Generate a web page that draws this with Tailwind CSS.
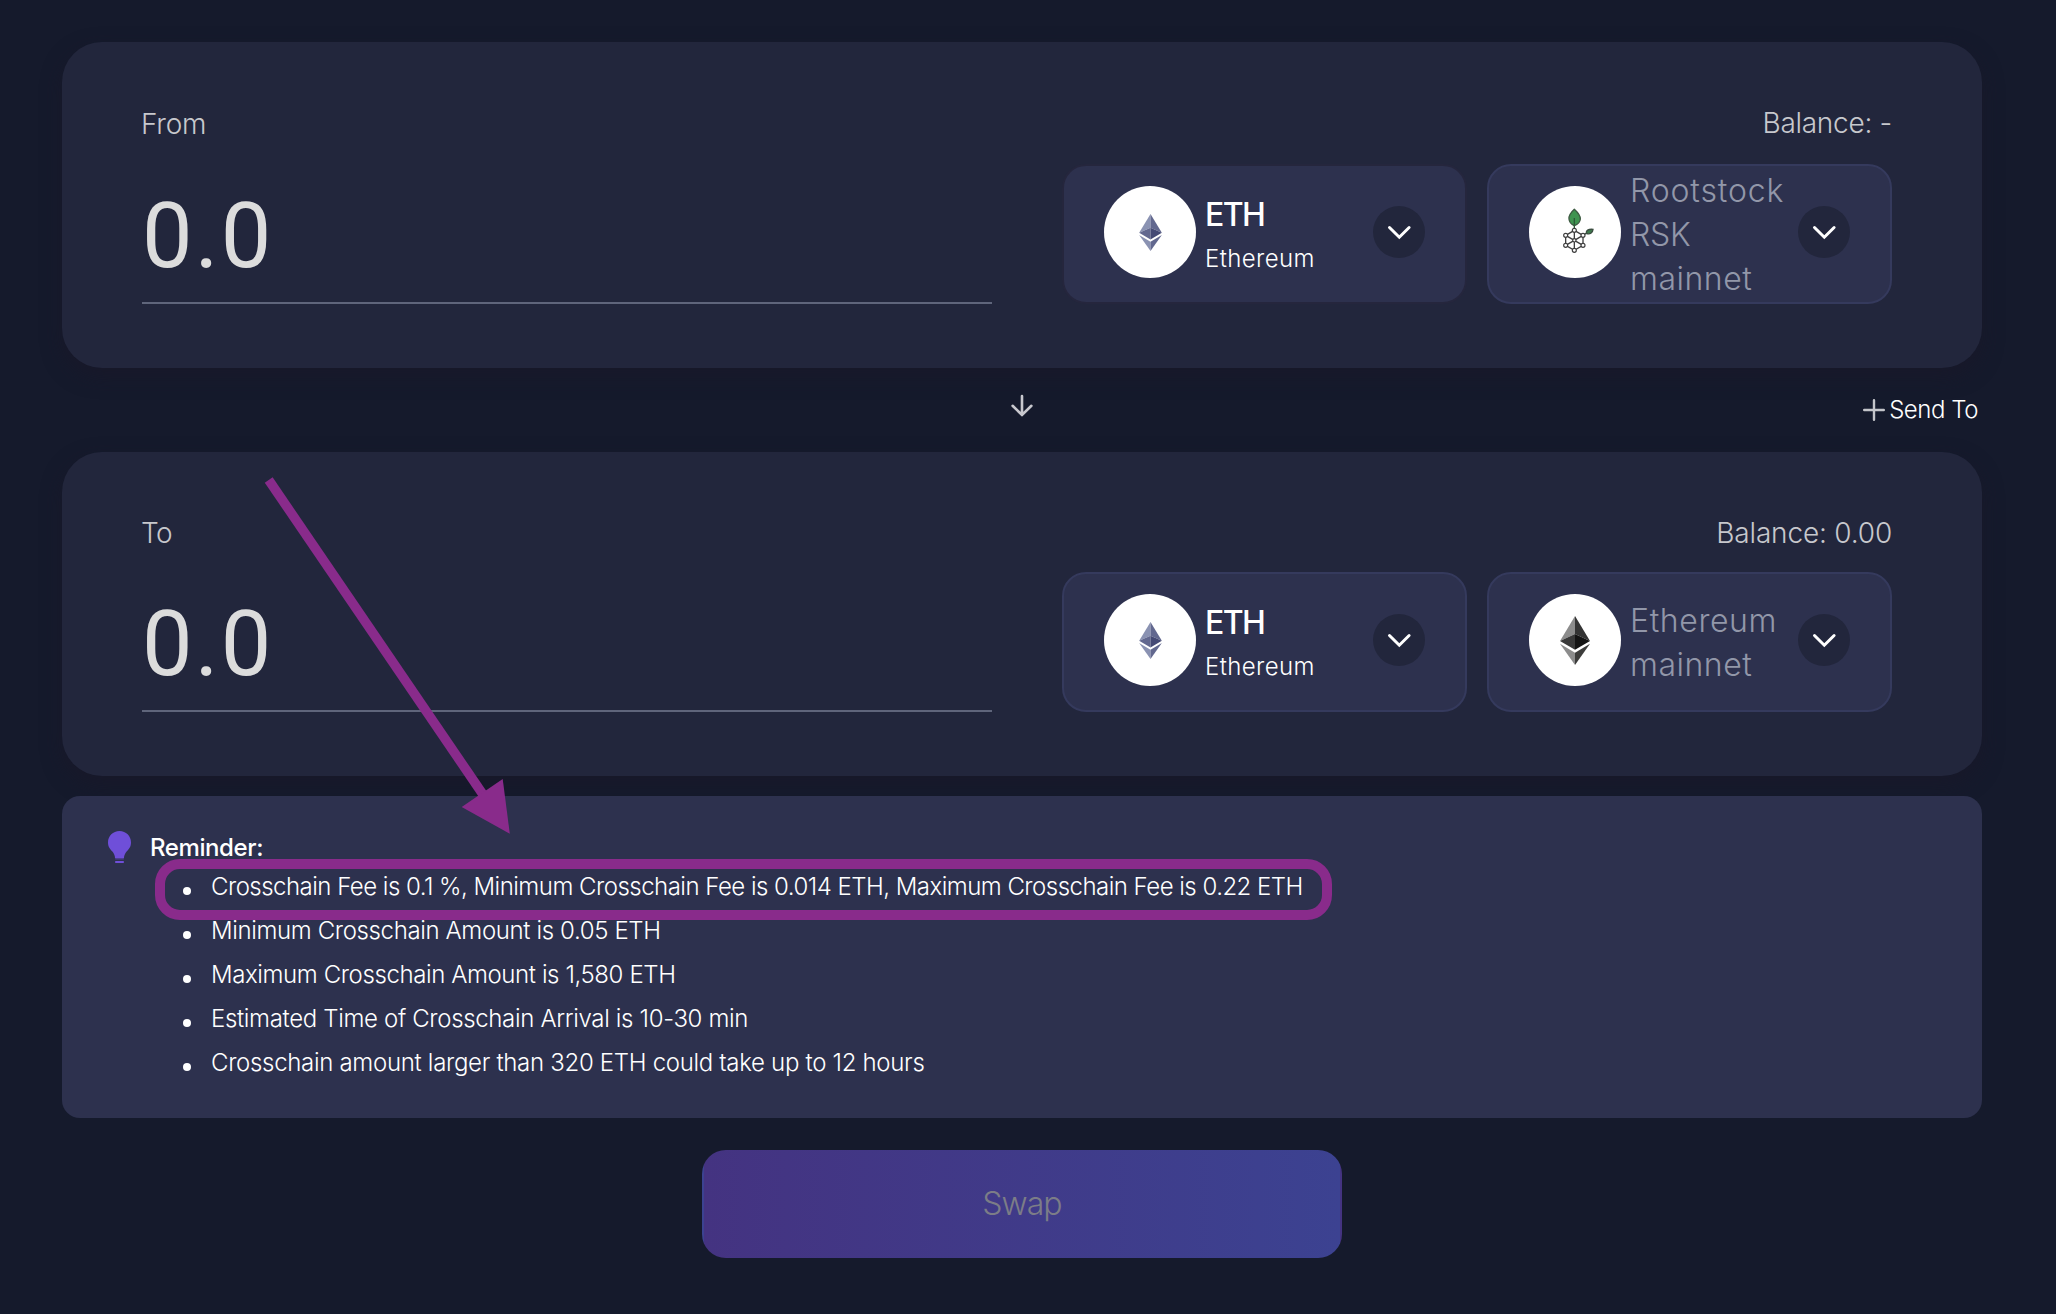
<!DOCTYPE html>
<html lang="en">
<head>
<meta charset="utf-8">
<title>Swap</title>
<script src="https://cdn.jsdelivr.net/npm/@tailwindcss/browser@4"></script>
</head>
<body class="relative h-[1314px] w-[2056px] overflow-hidden bg-[#151a2c] pt-[42px] pl-[62px] font-['Inter',sans-serif] font-light text-white">
<svg class="hidden">
  <symbol id="chevron" viewBox="0 0 52 52"><path d="M16.5 21.5 26.3 31.2 36.1 21.5" fill="none" stroke="#fff" stroke-width="3" stroke-linecap="round"/></symbol>
  <symbol id="eth-blue" viewBox="0 0 256 417">
    <path fill="#8a92b2" d="M128 0 0 212 128 154z"/><path fill="#62688f" d="M128 0 256 212 128 154z"/>
    <path fill="#62688f" d="M0 212 128 154V288z"/><path fill="#454a75" d="M256 212 128 154V288z"/>
    <path fill="#8a92b2" d="M0 237 128 312V417z"/><path fill="#62688f" d="M256 237 128 312V417z"/>
  </symbol>
  <symbol id="eth-dark" viewBox="0 0 256 417">
    <path fill="#8c8c8c" d="M128 0 0 212 128 154z"/><path fill="#343434" d="M128 0 256 212 128 154z"/>
    <path fill="#393939" d="M0 212 128 154V288z"/><path fill="#141414" d="M256 212 128 154V288z"/>
    <path fill="#8c8c8c" d="M0 237 128 312V417z"/><path fill="#3c3c3b" d="M256 237 128 312V417z"/>
  </symbol>
</svg>

<main class="w-[1920px]">
  <section class="h-[326px] rounded-[40px] bg-[#22263c] px-20 pt-[60px] pr-[90px] shadow-[0_8px_20px_rgba(26,24,40,0.6)]">
    <div class="flex h-[62px] items-start justify-between text-[28px] leading-[42px] text-[#c7c8cd]">
      <span class="mt-px -ml-px tracking-[-0.2px]">From</span><span class="tracking-[-0.28px]">Balance: -</span>
    </div>
    <div class="flex">
      <div class="h-[140px] w-[850px] border-b-2 border-[#5f657b] pt-[5px] font-['Roboto',sans-serif] text-[90px] leading-[135px] font-normal tracking-[2.200px] text-[#dcdcdc]">0.0</div>
      <div class="ml-[70px] flex gap-5">
        <div class="flex h-[140px] w-[405px] items-center rounded-[24px] border-2 border-[#25263d] bg-[#2d314e] px-10 pb-1">
          <div class="flex size-[92px] shrink-0 items-center justify-center rounded-full bg-white"><svg class="h-[37px] w-[23px]"><use href="#eth-blue"/></svg></div>
          <div class="ml-[9px] grow pt-[9px]">
            <p class="text-[32px] leading-[44px] font-medium tracking-[-1.6px]">ETH</p>
            <p class="text-2xl leading-[44px] tracking-[0.4px]">Ethereum</p>
          </div>
          <div class="size-[52px] shrink-0 rounded-full bg-[#22263c]"><svg class="size-[52px]"><use href="#chevron"/></svg></div>
        </div>
        <div class="flex h-[140px] w-[405px] items-center rounded-[24px] border-2 border-[#353a5d] bg-[#2d314e] px-10 pb-1">
          <div class="size-[92px] shrink-0 rounded-full bg-white">
            <svg class="size-[92px]" viewBox="27 18 276 276" fill="none" stroke="#3f3f3f" stroke-width="4">
              <path fill="#3f9450" stroke="#3d5a42" d="M163 88C151 99 146 107 147 117c1 10 8 17 16 20 9-3 17-10 18-20 0-10-7-19-18-29z"/>
              <path stroke="#2c5a36" d="M163 114V150"/>
              <path fill="#3f7a4d" stroke="#3b4d40" d="M199 160c-1-9 5-13 20-12-1 11-9 16-20 12zM191 165l10-7"/>
              <path d="M163 151 189 166V196L163 211 137 196V166zM163 151V211M137 166 189 196M189 166 137 196"/>
              <g fill="#fff" stroke-width="3.5"><circle cx="163" cy="151" r="6"/><circle cx="189" cy="166" r="6"/><circle cx="189" cy="196" r="6"/><circle cx="163" cy="211" r="6"/><circle cx="137" cy="196" r="6"/><circle cx="137" cy="166" r="6"/><circle cx="163" cy="181" r="5"/></g>
            </svg>
          </div>
          <div class="ml-[9px] w-[168px] pt-[5px] text-[32px] leading-[44px] text-[#9297a9]">
            <p class="tracking-[0.85px]">Rootstock</p><p class="tracking-[-0.2px]">RSK</p><p class="tracking-[0.5px]">mainnet</p>
          </div>
          <div class="size-[52px] shrink-0 rounded-full bg-[#22263c]"><svg class="size-[52px]"><use href="#chevron"/></svg></div>
        </div>
      </div>
    </div>
  </section>

  <div class="grid h-[84px] grid-cols-3 items-start">
    <svg class="col-start-2 mt-[26px] size-6 justify-self-center" viewBox="0 0 24 24" fill="none" stroke="#c8c8ce" stroke-width="2.6" stroke-linecap="round"><path d="M12 2V21M2.6 11.800 12 20.900 21.4 11.800"/></svg>
    <div class="flex items-start justify-end pt-6 pr-1">
      <svg class="mt-[7px] mr-1 size-[22px]" viewBox="0 0 22 22" stroke="#c4c5ca" stroke-width="2.4" stroke-linecap="round"><path d="M11 1.2V20.8M1.2 11H20.8"/></svg>
      <span class="text-2xl leading-9 tracking-[-0.45px]">Send To</span>
    </div>
  </div>

  <section class="h-[324px] rounded-[40px] bg-[#22263c] px-20 pt-[60px] pr-[90px] shadow-[0_8px_20px_rgba(26,24,40,0.6)]">
    <div class="flex h-[60px] items-start justify-between text-[28px] leading-[42px] text-[#c7c8cd]">
      <span class="-ml-px tracking-[-0.6px]">To</span><span class="tracking-[-0.18px]">Balance: 0.00</span>
    </div>
    <div class="flex">
      <div class="h-[140px] w-[850px] border-b-2 border-[#5f657b] pt-[5px] font-['Roboto',sans-serif] text-[90px] leading-[135px] font-normal tracking-[2.200px] text-[#dcdcdc]">0.0</div>
      <div class="ml-[70px] flex gap-5">
        <div class="flex h-[140px] w-[405px] items-center rounded-[24px] border-2 border-[#353a5d] bg-[#2d314e] px-10 pb-1">
          <div class="flex size-[92px] shrink-0 items-center justify-center rounded-full bg-white"><svg class="h-[37px] w-[23px]"><use href="#eth-blue"/></svg></div>
          <div class="ml-[9px] grow pt-[9px]">
            <p class="text-[32px] leading-[44px] font-medium tracking-[-1.6px]">ETH</p>
            <p class="text-2xl leading-[44px] tracking-[0.4px]">Ethereum</p>
          </div>
          <div class="size-[52px] shrink-0 rounded-full bg-[#22263c]"><svg class="size-[52px]"><use href="#chevron"/></svg></div>
        </div>
        <div class="flex h-[140px] w-[405px] items-center rounded-[24px] border-2 border-[#353a5d] bg-[#2d314e] px-10 pb-1">
          <div class="flex size-[92px] shrink-0 items-center justify-center rounded-full bg-white"><svg class="h-[49px] w-[30px]"><use href="#eth-dark"/></svg></div>
          <div class="ml-[9px] w-[168px] pt-[5px] text-[32px] leading-[44px] text-[#9297a9]">
            <p class="tracking-[0.6px]">Ethereum</p><p class="tracking-[0.5px]">mainnet</p>
          </div>
          <div class="size-[52px] shrink-0 rounded-full bg-[#22263c]"><svg class="size-[52px]"><use href="#chevron"/></svg></div>
        </div>
      </div>
    </div>
  </section>

  <section class="mt-5 h-[322px] rounded-[18px] bg-[#2d314e] pt-[30px] pl-[46px] text-2xl leading-[44px]">
    <div class="flex h-[39px] items-start">
      <svg class="mt-[5px] h-8 w-[23px]" viewBox="0 0 23 32" fill="#6f4fd9"><path d="M11.5 0C5 0 0 5 0 11.4c0 4.4 2.2 6.6 4.4 9.2 1.6 2 2.6 4.200 2.600 6.400h9c0-2.200 1-4.400 2.600-6.400 2.200-2.600 4.400-4.800 4.400-9.200C23 5 18 0 11.500 0z"/><path d="M7.200 27.400h8.600v.8H7.200zM7.200 30h8.600v2H7.200z"/></svg>
      <h2 class="ml-[19px] font-medium tracking-[-0.4px]">Reminder:</h2>
    </div>
    <ul class="ml-[75px]">
      <li class="flex gap-5"><i class="mt-[22px] size-2 rounded-full bg-white"></i><span class="tracking-[-0.52px]">Crosschain Fee is 0.1 %, Minimum Crosschain Fee is 0.014 ETH, Maximum Crosschain Fee is 0.22 ETH</span></li>
      <li class="flex gap-5"><i class="mt-[22px] size-2 rounded-full bg-white"></i><span class="tracking-[-0.37px]">Minimum Crosschain Amount is 0.05 ETH</span></li>
      <li class="flex gap-5"><i class="mt-[22px] size-2 rounded-full bg-white"></i><span class="tracking-[-0.4px]">Maximum Crosschain Amount is 1,580 ETH</span></li>
      <li class="flex gap-5"><i class="mt-[22px] size-2 rounded-full bg-white"></i><span class="tracking-[-0.34px]">Estimated Time of Crosschain Arrival is 10-30 min</span></li>
      <li class="flex gap-5"><i class="mt-[22px] size-2 rounded-full bg-white"></i><span class="tracking-[-0.31px]">Crosschain amount larger than 320 ETH could take up to 12 hours</span></li>
    </ul>
  </section>

  <button class="mx-auto mt-8 flex h-[108px] w-[640px] items-center justify-center rounded-[24px] border-2 border-transparent bg-[linear-gradient(90deg,#443381,#3c4291)] text-[32px] leading-[44px] tracking-[-0.95px] text-[#7c7d87]">Swap</button>
</main>

<!-- annotation: arrow pointing at the highlighted fee line -->
<svg class="absolute top-0 left-0 h-[1314px] w-[2056px]" viewBox="0 0 2056 1314">
  <path d="M268.700 480 484 796" stroke="#892b8b" stroke-width="9.500"/>
  <path d="M509.800 833.700 502.700 779 461.700 807z" fill="#892b8b"/>
</svg>
<div class="absolute top-[859px] left-[155px] h-[61px] w-[1177px] rounded-[25px] border-[10px] border-[#892b8b]"></div>
</body>
</html>
